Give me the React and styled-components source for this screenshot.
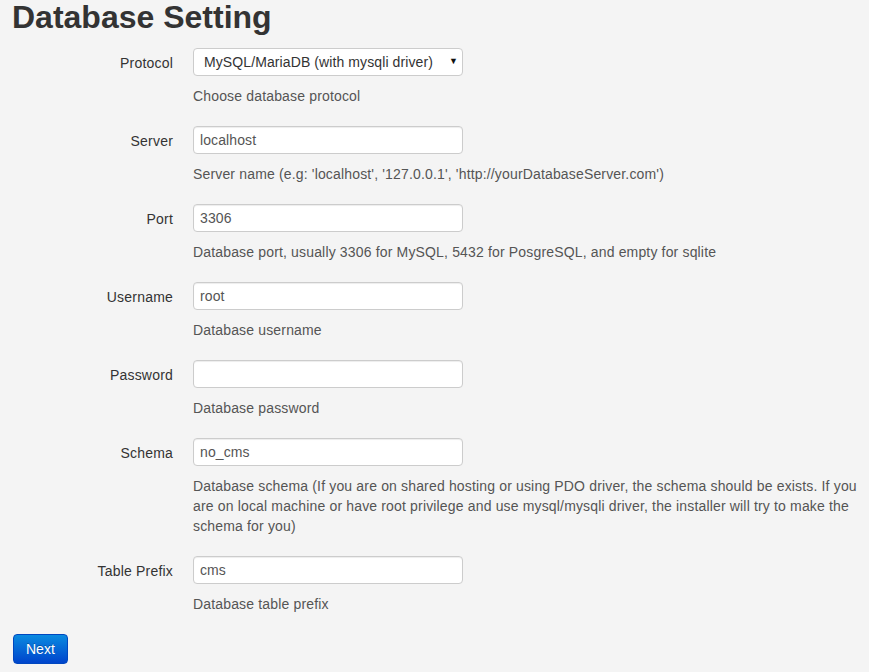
import React from "react";
import styled, { createGlobalStyle } from "styled-components";

const GlobalStyle = createGlobalStyle`
  html, body {
    margin: 0;
    padding: 0;
    background: #f4f4f4;
  }
  body {
    font-family: "Liberation Sans", Arial, sans-serif;
    font-size: 14px;
    color: #333;
  }
`;

const Page = styled.div`
  padding: 0 8px 8px 13px;
`;

const Title = styled.h1`
  margin: 0 0 13px -1px;
  font-size: 32px;
  line-height: 1.1;
  font-weight: bold;
  color: #333;
`;

const Form = styled.form`
  display: grid;
  grid-template-columns: 160px 1fr;
  column-gap: 20px;
`;

const Label = styled.label`
  padding-top: 1px;
  text-align: right;
  line-height: 28px;
  font-size: 14px;
  letter-spacing: 0.2px;
  color: #333;
`;

const Field = styled.div`
  display: flex;
  flex-direction: column;
  align-items: flex-start;
`;

const Input = styled.input`
  box-sizing: border-box;
  width: 270px;
  height: 28px;
  padding: 0 6px;
  font-family: "Liberation Sans", Arial, sans-serif;
  font-size: 14px;
  letter-spacing: 0.1px;
  color: #555;
  background: #fff;
  border: 1px solid #ccc;
  border-radius: 4px;
  box-shadow: inset 0 1px 1px rgba(0, 0, 0, 0.075);
  outline: none;
`;

const SelectWrap = styled.div`
  position: relative;
  width: 270px;

  &::after {
    content: "▼";
    position: absolute;
    right: 5px;
    top: 8px;
    font-size: 9px;
    color: #111;
    pointer-events: none;
  }
`;

const Select = styled.select`
  box-sizing: border-box;
  appearance: none;
  -webkit-appearance: none;
  width: 270px;
  height: 28px;
  padding: 0 20px 0 10px;
  font-family: "Liberation Sans", Arial, sans-serif;
  font-size: 14px;
  letter-spacing: 0.1px;
  color: #333;
  background: #fff;
  border: 1px solid #ccc;
  border-radius: 4px;
  outline: none;
`;

const Help = styled.p`
  margin: 10px 0 20px;
  line-height: 20px;
  font-size: 14px;
  letter-spacing: 0.16px;
  color: #555;
`;

const Button = styled.button`
  box-sizing: border-box;
  height: 30px;
  padding: 0 12px;
  font-family: "Liberation Sans", Arial, sans-serif;
  font-size: 14px;
  color: #fff;
  border: 1px solid #0047bf;
  border-radius: 4px;
  background: linear-gradient(to bottom, #0a8ae0, #0044cc);
  text-shadow: 0 -1px 0 rgba(0, 0, 0, 0.25);
  cursor: pointer;
`;

const fields = [
  { name: "server", label: "Server", value: "localhost", help: "Server name (e.g: 'localhost', '127.0.0.1', 'http://yourDatabaseServer.com')" },
  { name: "port", label: "Port", value: "3306", help: "Database port, usually 3306 for MySQL, 5432 for PosgreSQL, and empty for sqlite" },
  { name: "username", label: "Username", value: "root", help: "Database username" },
  { name: "password", label: "Password", value: "", help: "Database password", type: "password" },
  {
    name: "schema",
    label: "Schema",
    value: "no_cms",
    help: "Database schema (If you are on shared hosting or using PDO driver, the schema should be exists. If you are on local machine or have root privilege and use mysql/mysqli driver, the installer will try to make the schema for you)",
  },
  { name: "prefix", label: "Table Prefix", value: "cms", help: "Database table prefix" },
];

export default function App() {
  return (
    <Page>
      <GlobalStyle />
      <Title>Database Setting</Title>
      <Form onSubmit={(e) => e.preventDefault()}>
        <Label htmlFor="protocol">Protocol</Label>
        <Field>
          <SelectWrap>
            <Select id="protocol" defaultValue="mysqli">
              <option value="mysqli">MySQL/MariaDB (with mysqli driver)</option>
              <option value="mysql">MySQL (with mysql driver)</option>
              <option value="pdo_mysql">MySQL (with PDO driver)</option>
              <option value="pgsql">PostgreSQL</option>
              <option value="sqlite">SQLite</option>
            </Select>
          </SelectWrap>
          <Help>Choose database protocol</Help>
        </Field>
        {fields.map((f) => (
          <React.Fragment key={f.name}>
            <Label htmlFor={f.name}>{f.label}</Label>
            <Field>
              <Input id={f.name} type={f.type || "text"} defaultValue={f.value} />
              <Help>{f.help}</Help>
            </Field>
          </React.Fragment>
        ))}
      </Form>
      <Button type="submit">Next</Button>
    </Page>
  );
}
